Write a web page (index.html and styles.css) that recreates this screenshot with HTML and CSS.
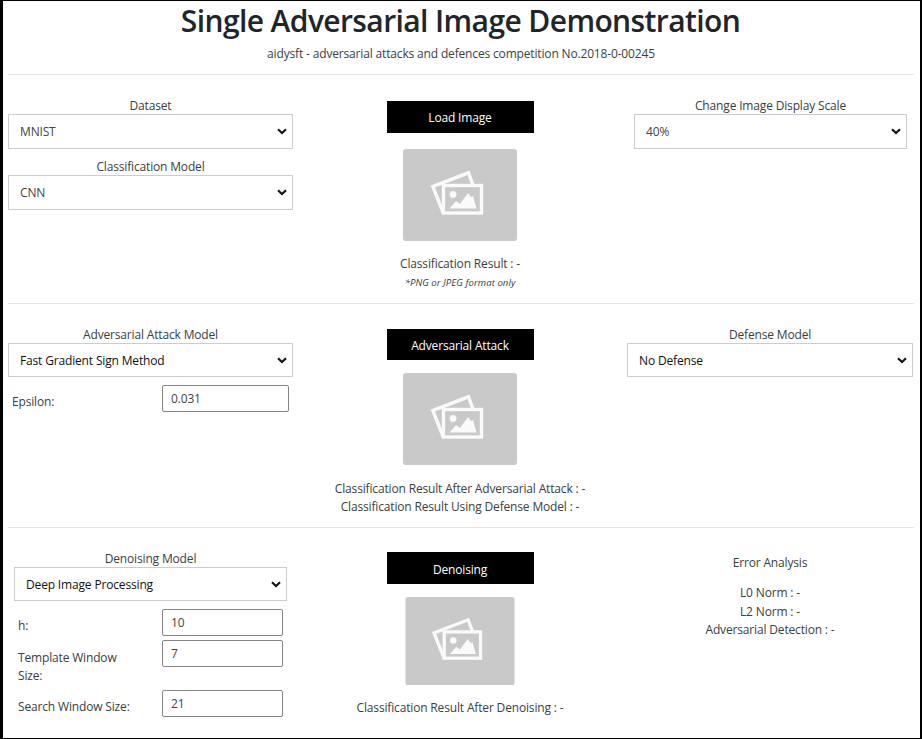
FILE: index.html
```
<!DOCTYPE html>
<html lang="en">
<head>
<meta charset="utf-8">
<title>Single Adversarial Image Demonstration</title>
<link rel="stylesheet" href="styles.css">
</head>
<body>
<svg class="defs" width="0" height="0" aria-hidden="true">
  <symbol id="photos" viewBox="0 0 114 92">
    <rect width="114" height="92" rx="3" fill="#c9c9c9"/>
    <path d="M40.500 64.500L29.800 37.500L65.500 23.800L70 36" fill="none" stroke="#fafafa" stroke-width="3.400"/>
    <rect x="40.500" y="36.500" width="38" height="27.500" fill="#c9c9c9" stroke="#fafafa" stroke-width="3.400"/>
    <circle cx="50" cy="45.500" r="3.400" fill="#fafafa"/>
    <path d="M46.500 59.500L53 52L57 55L65 44L68 48L70 47L73.500 59.500Z" fill="#fafafa"/>
  </symbol>
  <symbol id="chevron" viewBox="0 0 10 7">
    <path d="M1 1.300L5 5L9 1.300" fill="none" stroke="#111" stroke-width="2.100"/>
  </symbol>
</svg>
<main class="page">
  <header class="header">
    <h1 class="title">Single Adversarial Image Demonstration</h1>
    <p class="subtitle">aidysft - adversarial attacks and defences competition No.2018-0-00245</p>
  </header>

  <section class="row row-load">
    <div class="col">
      <label class="label">Dataset</label>
      <div class="picker"><select class="select"><option>MNIST</option></select><svg class="chevron"><use href="#chevron"/></svg></div>
      <label class="label label-next">Classification Model</label>
      <div class="picker"><select class="select"><option>CNN</option></select><svg class="chevron"><use href="#chevron"/></svg></div>
    </div>
    <div class="col col-mid">
      <button class="btn">Load Image</button>
      <svg class="thumb"><use href="#photos"/></svg>
      <p class="line">Classification Result : -</p>
      <p class="note">*PNG or JPEG format only</p>
    </div>
    <div class="col col-scale">
      <label class="label">Change Image Display Scale</label>
      <div class="picker"><select class="select"><option>40%</option></select><svg class="chevron"><use href="#chevron"/></svg></div>
    </div>
  </section>

  <section class="row row-attack">
    <div class="col">
      <label class="label">Adversarial Attack Model</label>
      <div class="picker"><select class="select"><option>Fast Gradient Sign Method</option></select><svg class="chevron"><use href="#chevron"/></svg></div>
      <div class="field field-eps"><span class="field-name">Epsilon:</span><input class="input" value="0.031"></div>
    </div>
    <div class="col col-mid">
      <button class="btn">Adversarial Attack</button>
      <svg class="thumb"><use href="#photos"/></svg>
      <p class="line">Classification Result After Adversarial Attack : -</p>
      <p class="line">Classification Result Using Defense Model : -</p>
    </div>
    <div class="col">
      <label class="label">Defense Model</label>
      <div class="picker"><select class="select"><option>No Defense</option></select><svg class="chevron"><use href="#chevron"/></svg></div>
    </div>
  </section>

  <section class="row row-denoise">
    <div class="col col-denoise">
      <label class="label">Denoising Model</label>
      <div class="picker"><select class="select"><option>Deep Image Processing</option></select><svg class="chevron"><use href="#chevron"/></svg></div>
      <div class="field field-h"><span class="field-name">h:</span><input class="input" value="10"></div>
      <div class="field field-tpl"><span class="field-name">Template Window Size:</span><input class="input" value="7"></div>
      <div class="field"><span class="field-name">Search Window Size:</span><input class="input" value="21"></div>
    </div>
    <div class="col col-mid">
      <button class="btn">Denoising</button>
      <svg class="thumb thumb-small"><use href="#photos"/></svg>
      <p class="line">Classification Result After Denoising : -</p>
    </div>
    <div class="col col-error">
      <p class="line error-title">Error Analysis</p>
      <p class="line">L0 Norm : -</p>
      <p class="line">L2 Norm : -</p>
      <p class="line">Adversarial Detection : -</p>
    </div>
  </section>
</main>
</body>
</html>
```
FILE: styles.css
```
* { box-sizing: border-box; }
body {
  margin: 0;
  background: #fff;
  color: #3a3e42;
  font: 12px/18.4px "Open Sans", "Noto Sans", sans-serif;
  letter-spacing: -0.16px;
}
p, h1 { margin: 0; }
.defs { position: absolute; }
.page {
  height: 739px;
  overflow: hidden;
  border: solid #000;
  border-width: 1px 2px 1px 3px;
  padding: 0 6px 0 5px;
  white-space: nowrap;
}
.header { height: 74px; border-bottom: 1px solid #e5e5e5; text-align: center; }
.title {
  margin-left: -1px;
  font-size: 30px;
  line-height: 40px;
  font-weight: 600;
  letter-spacing: -0.6px;
  color: #212529;
}
.subtitle { padding-top: 4px; }
.row { display: grid; grid-template-columns: 285px 334px 286px; }
.row-load { height: 229px; border-bottom: 1px solid #e5e5e5; }
.row-attack { height: 224px; border-bottom: 1px solid #e5e5e5; }
.row-denoise { height: 210px; }
.col { display: flex; flex-direction: column; padding-top: 22px; }
.row .col-mid { align-items: center; padding-top: 26px; }
.row-attack .col-mid { padding-top: 25px; }
.row-denoise .col-mid { padding-top: 24px; }
.col-scale { padding-left: 7px; padding-right: 6px; }
.col-denoise { padding-left: 6px; padding-right: 6px; }
.label { text-align: center; height: 17px; }
.label-next { margin-top: 9px; }
.picker { position: relative; height: 35px; }
.row-attack .picker, .row-denoise .picker { height: 34px; }
.select {
  appearance: none;
  display: block;
  height: 100%;
  width: 100%;
  border: 1px solid #ccc;
  border-radius: 0;
  background: #fff;
  color: #444;
  padding: 2px 0 0 11px;
  font: inherit;
  letter-spacing: inherit;
}
.row-attack .select, .row-denoise .select { color: #111; }
.chevron { position: absolute; right: 6px; top: 14px; width: 10px; height: 7px; pointer-events: none; }
.btn {
  width: 147px;
  height: 32px;
  border: 0;
  padding: 2px 0 0;
  background: #000;
  color: #fff;
  font: inherit;
  letter-spacing: inherit;
}
.row-attack .btn { height: 31px; padding-top: 3px; }
.row-denoise .btn { padding-top: 4px; }
.thumb { width: 114px; height: 92px; margin: 16px 0 14px; }
.row-attack .thumb { margin: 13px 0 15px; }
.row-denoise .thumb-small { width: 110px; height: 88px; margin: 13px 0 14px; }
.line { height: 18.4px; text-align: center; }
.note { font-size: 9.6px; letter-spacing: 0.05px; font-style: italic; padding-top: 1px; }
.field { display: flex; justify-content: space-between; }
.field-name { white-space: normal; width: 124px; padding-top: 8px; }
.input {
  width: 121px;
  height: 27px;
  border: 1px solid #858585;
  border-radius: 2px;
  padding: 0 0 0 8px;
  color: #444;
  font: inherit;
  letter-spacing: inherit;
}
.field-eps { padding: 8px 4px 0; }
.field-eps .input { width: 127px; }
.col-denoise .field { padding: 0 4px; }
.field-h { margin-top: 8px; height: 31px; }
.field-tpl { height: 50px; }
.field-tpl .field-name { padding-top: 9px; }
.row-denoise .col-error { padding-top: 26px; }
.error-title { margin-bottom: 12px; }
```
